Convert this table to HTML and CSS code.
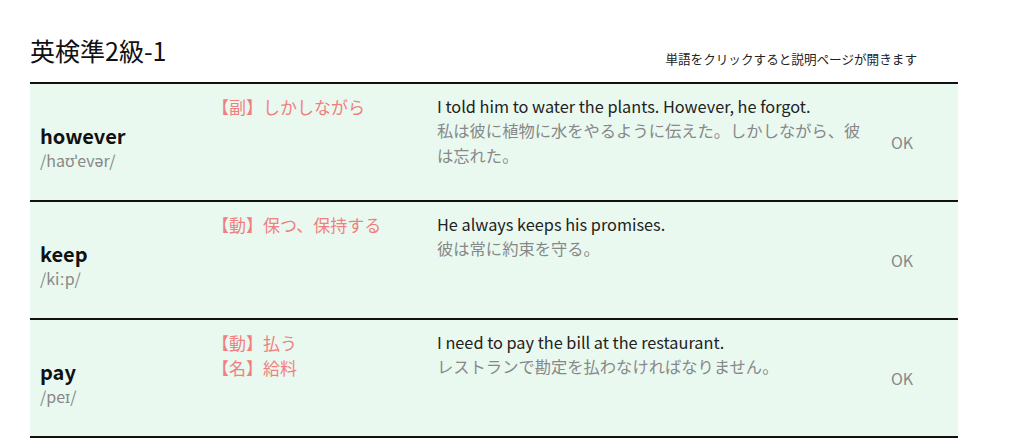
FILE: index.html
```html
<!DOCTYPE html>
<html lang="ja">
<head>
<meta charset="utf-8">
<title>英検準2級-1</title>
<link rel="stylesheet" href="styles.css">
</head>
<body>
<div class="page">
  <header class="header">
    <h1 class="title">英検準2級-1</h1>
    <p class="note">単語をクリックすると説明ページが開きます</p>
  </header>
  <div class="list">
    <div class="row">
      <div class="word-cell">
        <div class="word">however</div>
        <div class="pron">/haʊˈevər/</div>
      </div>
      <div class="meaning-cell">
        <div class="meaning">【副】しかしながら</div>
      </div>
      <div class="example-cell">
        <div class="ex-en">I told him to water the plants. However, he forgot.</div>
        <div class="ex-ja">私は彼に植物に水をやるように伝えた。しかしながら、彼は忘れた。</div>
      </div>
      <div class="status-cell">OK</div>
    </div>
    <div class="row">
      <div class="word-cell">
        <div class="word">keep</div>
        <div class="pron">/kiːp/</div>
      </div>
      <div class="meaning-cell">
        <div class="meaning">【動】保つ、保持する</div>
      </div>
      <div class="example-cell">
        <div class="ex-en">He always keeps his promises.</div>
        <div class="ex-ja">彼は常に約束を守る。</div>
      </div>
      <div class="status-cell">OK</div>
    </div>
    <div class="row">
      <div class="word-cell">
        <div class="word">pay</div>
        <div class="pron">/peɪ/</div>
      </div>
      <div class="meaning-cell">
        <div class="meaning">【動】払う</div>
        <div class="meaning">【名】給料</div>
      </div>
      <div class="example-cell">
        <div class="ex-en">I need to pay the bill at the restaurant.</div>
        <div class="ex-ja">レストランで勘定を払わなければなりません。</div>
      </div>
      <div class="status-cell">OK</div>
    </div>
  </div>
</div>
</body>
</html>
```

FILE: styles.css
```css
* {
  box-sizing: border-box;
}

html, body {
  margin: 0;
  padding: 0;
  background: #ffffff;
}

body {
  font-family: "Noto Sans CJK JP", "Noto Sans", sans-serif;
  color: #222222;
  font-size: 16px;
  line-height: 1.5;
}

.page {
  width: 928px;
  margin-left: 30px;
  padding-top: 32px;
}

.header {
  display: flex;
  justify-content: space-between;
  align-items: flex-end;
  padding-right: 41px;
  margin-bottom: 14px;
}

.title {
  margin: 0;
  font-size: 25px;
  line-height: 36px;
  font-weight: 400;
  color: #111111;
}

.note {
  margin: 0;
  font-size: 12.6px;
  line-height: 18px;
  color: #222222;
}

.list {
  border-top: 2px solid #111111;
}

.row {
  display: grid;
  grid-template-columns: 172px 225px 444px 87px;
  height: 118px;
  background: #e9f9f0;
  border-bottom: 2px solid #111111;
}

.word-cell {
  display: flex;
  flex-direction: column;
  justify-content: center;
  padding: 12px 10px 0 10px;
}

.word {
  font-size: 20px;
  line-height: 24px;
  font-weight: 700;
  color: #111111;
}

.pron {
  font-size: 16px;
  line-height: 24px;
  color: #888888;
}

.meaning-cell {
  padding: 10px 10px 0 10px;
}

.meaning {
  color: #f08080;
  font-size: 17px;
  line-height: 25px;
}

.example-cell {
  padding: 10px 10px 0 10px;
  font-size: 16.3px;
}

.ex-en {
  color: #222222;
  line-height: 24px;
}

.ex-ja {
  color: #888888;
  line-height: 25px;
}

.status-cell {
  display: flex;
  align-items: center;
  padding-left: 20px;
  color: #888888;
}
```
